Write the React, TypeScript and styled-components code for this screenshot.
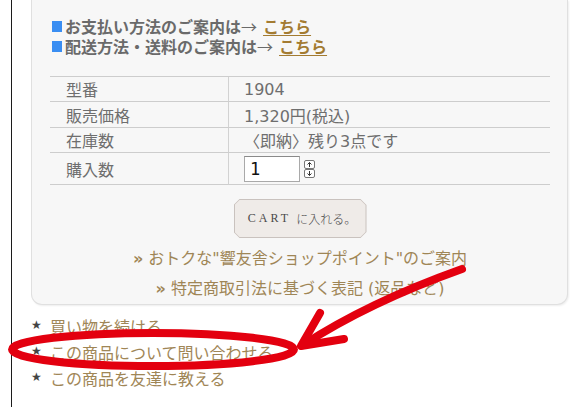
import React from 'react';
import styled, { createGlobalStyle } from 'styled-components';

const GlobalStyle = createGlobalStyle`
  html, body { margin: 0; padding: 0; background: #fff; }
  body {
    font-family: "DejaVu Sans", "Noto Sans CJK JP", sans-serif;
    width: 585px; height: 407px; overflow: hidden;
  }
`;

const Page = styled.div`
  position: relative;
  width: 585px;
  height: 407px;
  padding-left: 11px;
  box-sizing: border-box;
`;

const Column = styled.div`
  border-left: 1px solid #1c1c1c;
  height: 100%;
  padding-left: 19px;
  box-sizing: border-box;
`;

const Panel = styled.div`
  width: 537px;
  height: 305px;
  box-sizing: border-box;
  background: #f7f7f7;
  border: 1px solid #e0e0e0;
  border-top: none;
  border-radius: 0 0 11px 11px;
  box-shadow: 1px 1px 2px rgba(0, 0, 0, 0.07);
  padding: 16px 17px 0 18px;
  display: flex;
  flex-direction: column;
`;

const Notice = styled.div`
  padding-left: 2px;
  height: 20px;
  display: flex;
  align-items: center;
  font-family: "Noto Sans CJK JP", sans-serif;
  font-size: 16px;
  line-height: 20px;
  font-weight: bold;
  color: #6a6a6a;
  white-space: nowrap;
`;

const Square = styled.span`
  display: inline-block;
  width: 10px;
  height: 11px;
  background: #3a8ef2;
  margin: 0 3px 0 0;
`;

const Arrow = styled.span`
  font-weight: normal;
  margin-right: 6px;
`;

const Here = styled.a`
  color: #a37b31;
  text-decoration: underline;
  text-underline-offset: 2px;
`;

const Spec = styled.div`
  margin-top: 20px;
  width: 500px;
  display: grid;
  grid-template-columns: 179px 1fr;
  border-top: 1px solid #cdcdcd;
`;

const Label = styled.div<{ $h: number }>`
  height: ${(p) => p.$h}px;
  border-bottom: 1px solid #cdcdcd;
  border-right: 1px solid #d2d2d2;
  padding-left: 16px;
  display: flex;
  align-items: center;
  font-family: "Noto Sans CJK JP", sans-serif;
  font-size: 16px;
  color: #6e6e6e;
`;

const Value = styled.div<{ $h: number }>`
  height: ${(p) => p.$h}px;
  border-bottom: 1px solid #cdcdcd;
  padding-left: 15px;
  display: flex;
  align-items: center;
  gap: 2px;
  font-size: 16px;
  color: #6e6e6e;
`;

const Qty = styled.div`
  width: 56px;
  height: 26px;
  box-sizing: border-box;
  background: #fff;
  border: 1px solid #a9a9a9;
  border-top-color: #8a8a8a;
  padding-left: 5px;
  display: flex;
  align-items: center;
  font-family: "DejaVu Sans Mono", monospace;
  font-size: 17px;
  color: #111;
`;

const CartWrap = styled.div`
  align-self: center;
  margin-top: 14px;
  width: 133px;
  height: 39px;
  background: #c9c2be;
  clip-path: polygon(6px 0, calc(100% - 6px) 0, 100% 6px, 100% calc(100% - 6px), calc(100% - 6px) 100%, 6px 100%, 0 calc(100% - 6px), 0 6px);
  padding: 1px;
  box-sizing: border-box;
`;

const CartButton = styled.button`
  width: 100%;
  height: 100%;
  border: none;
  background: #efebe8;
  clip-path: polygon(5px 0, calc(100% - 5px) 0, 100% 5px, 100% calc(100% - 5px), calc(100% - 5px) 100%, 5px 100%, 0 calc(100% - 5px), 0 5px);
  font-family: "Liberation Serif", "Noto Sans CJK JP", serif;
  font-size: 12px;
  font-weight: normal;
  letter-spacing: 3px;
  color: #4a4a4a;
  padding: 0 0 0 4px;
  display: flex;
  align-items: center;
  justify-content: center;
`;

const CartJa = styled.span`
  font-family: "Noto Sans CJK JP", serif;
  font-weight: 300;
  font-size: 12px;
  letter-spacing: 0;
  margin-left: 5px;
`;

const Links = styled.div`
  margin-top: 6px;
  display: flex;
  flex-direction: column;
  align-items: center;
`;

const InfoLink = styled.a`
  font-size: 16px;
  line-height: 30px;
  color: #9f8656;
  text-decoration: none;
  white-space: nowrap;
`;

const Chevron = styled.span`
  font-weight: bold;
  margin-right: 5px;
`;

const List = styled.ul`
  list-style: none;
  margin: 8px 0 0;
  padding: 0;
`;

const Item = styled.li`
  display: flex;
  align-items: center;
  height: 26px;
  font-family: "Noto Sans CJK JP", sans-serif;
  font-size: 16px;
  color: #9f8656;
  white-space: nowrap;
`;

const Star = styled.span`
  width: 19px;
  font-family: "DejaVu Sans", sans-serif;
  font-size: 12px;
  color: #444;
  line-height: 1;
  margin-top: -2px;
`;

const Overlay = styled.svg`
  position: absolute;
  left: 0;
  top: 0;
  pointer-events: none;
`;

const Spinner = () => (
  <svg width="13" height="20" viewBox="0 0 13 20" style={{ marginLeft: 1 }}>
    <rect x="1.5" y="1.5" width="10" height="8" rx="1.5" fill="#fff" stroke="#777" />
    <rect x="1.5" y="10.5" width="10" height="8" rx="1.5" fill="#fff" stroke="#777" />
    <path d="M6.5 3.5 V8 M4.5 5.5 L6.5 3.5 L8.5 5.5" stroke="#333" fill="none" strokeWidth="1" />
    <path d="M6.5 12 V16.5 M4.5 14.5 L6.5 16.5 L8.5 14.5" stroke="#333" fill="none" strokeWidth="1" />
  </svg>
);

const rows = [
  { label: '型番', value: '1904', h: 24 },
  { label: '販売価格', value: '1,320円(税込)', h: 25 },
  { label: '在庫数', value: '〈即納〉残り3点です', h: 24 },
];

export default function App() {
  return (
    <>
      <GlobalStyle />
      <Page>
        <Column>
          <Panel>
            <Notice>
              <Square aria-label="■" />お支払い方法のご案内は<Arrow>→</Arrow>
              <Here href="#">こちら</Here>
            </Notice>
            <Notice>
              <Square aria-label="■" />配送方法・送料のご案内は<Arrow>→</Arrow>
              <Here href="#">こちら</Here>
            </Notice>
            <Spec>
              {rows.map((r) => (
                <React.Fragment key={r.label}>
                  <Label $h={r.h}>{r.label}</Label>
                  <Value $h={r.h}>{r.value}</Value>
                </React.Fragment>
              ))}
              <Label $h={31}>購入数</Label>
              <Value $h={31}>
                <Qty>1</Qty>
                <Spinner />
              </Value>
            </Spec>
            <CartWrap>
              <CartButton>
                CART<CartJa>に入れる。</CartJa>
              </CartButton>
            </CartWrap>
            <Links>
              <InfoLink href="#"><Chevron>»</Chevron>おトクな"響友舎ショップポイント"のご案内</InfoLink>
              <InfoLink href="#"><Chevron>»</Chevron>特定商取引法に基づく表記 (返品など)</InfoLink>
            </Links>
          </Panel>
          <List>
            <Item><Star>★</Star>買い物を続ける</Item>
            <Item><Star>★</Star>この商品について問い合わせる</Item>
            <Item><Star>★</Star>この商品を友達に教える</Item>
          </List>
        </Column>
        <Overlay width="585" height="407" viewBox="0 0 585 407">
          <ellipse cx="153" cy="349.5" rx="141" ry="16.5" fill="none" stroke="#e3000f" strokeWidth="8" />
          <path d="M462 269 C 420 284, 360 308, 303 345" fill="none" stroke="#e3000f" strokeWidth="8" strokeLinecap="round" />
          <path d="M320 313 L 301 346 L 344 339" fill="none" stroke="#e3000f" strokeWidth="8" strokeLinecap="round" strokeLinejoin="round" />
        </Overlay>
      </Page>
    </>
  );
}
